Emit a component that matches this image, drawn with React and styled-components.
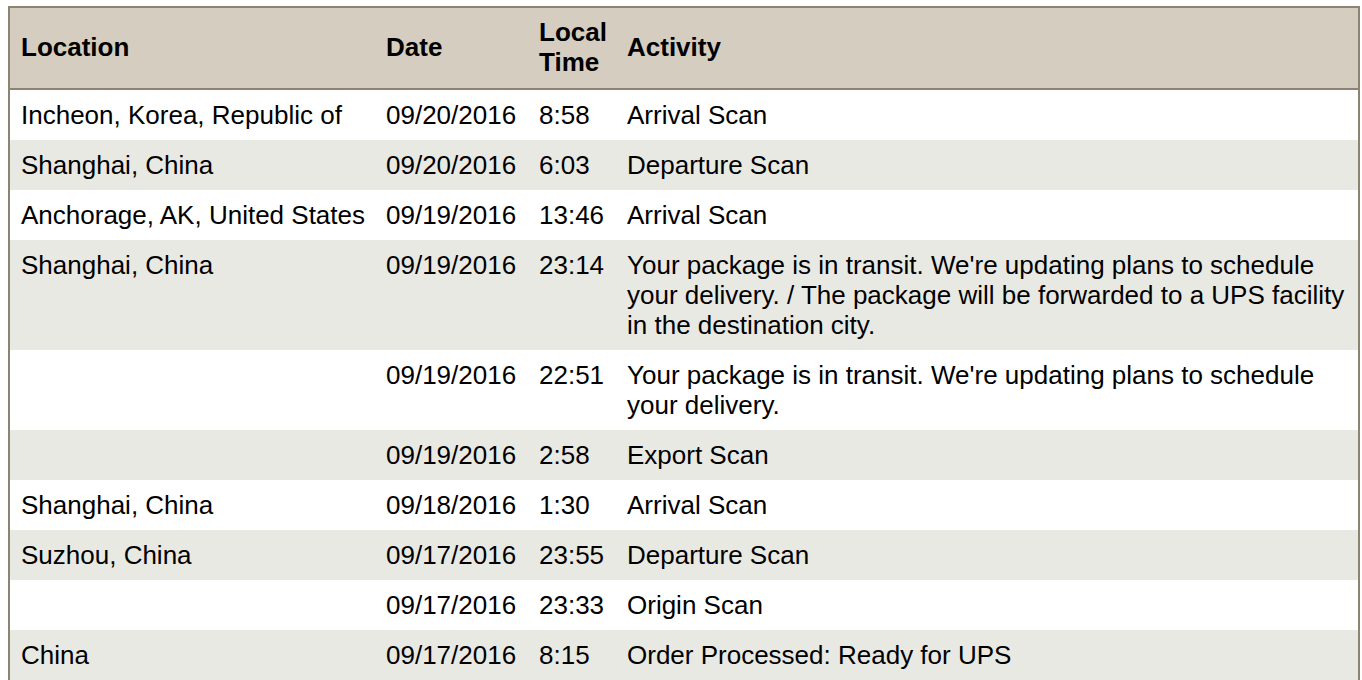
import React from "react";
import styled, { createGlobalStyle } from "styled-components";

const Global = createGlobalStyle`
  html, body { margin: 0; padding: 0; background: #ffffff; }
  body { font-family: "Liberation Sans", Arial, Helvetica, sans-serif; color: #000; }
`;

const Page = styled.div`
  padding: 6px 0 0 8px;
`;

const Table = styled.table`
  width: 1352px;
  table-layout: fixed;
  border-collapse: separate;
  border-spacing: 0;
  border: 2px solid #8c8373;
  border-bottom: none;
  font-size: 26px;
  line-height: 30px;
`;

const HeadCell = styled.th`
  background: #d5cdc0;
  border-bottom: 2px solid #8c8373;
  text-align: left;
  vertical-align: middle;
  font-weight: bold;
  padding: 9px 11px 11px;
  height: 60px;
  box-sizing: content-box;
`;

const Row = styled.tr`
  background: ${(p) => (p.$shaded ? "#e9e9e4" : "#ffffff")};
`;

const Cell = styled.td`
  vertical-align: top;
  padding: 10px 11px;
  white-space: ${(p) => (p.$wrap ? "normal" : "nowrap")};
`;

const rows = [
  ["Incheon, Korea, Republic of", "09/20/2016", "8:58", "Arrival Scan"],
  ["Shanghai, China", "09/20/2016", "6:03", "Departure Scan"],
  ["Anchorage, AK, United States", "09/19/2016", "13:46", "Arrival Scan"],
  [
    "Shanghai, China",
    "09/19/2016",
    "23:14",
    "Your package is in transit. We're updating plans to schedule your delivery. / The package will be forwarded to a UPS facility in the destination city.",
  ],
  [
    "",
    "09/19/2016",
    "22:51",
    "Your package is in transit. We're updating plans to schedule your delivery.",
  ],
  ["", "09/19/2016", "2:58", "Export Scan"],
  ["Shanghai, China", "09/18/2016", "1:30", "Arrival Scan"],
  ["Suzhou, China", "09/17/2016", "23:55", "Departure Scan"],
  ["", "09/17/2016", "23:33", "Origin Scan"],
  ["China", "09/17/2016", "8:15", "Order Processed: Ready for UPS"],
];

export default function App() {
  return (
    <Page>
      <Global />
      <Table>
        <colgroup>
          <col style={{ width: "365px" }} />
          <col style={{ width: "153px" }} />
          <col style={{ width: "88px" }} />
          <col />
        </colgroup>
        <thead>
          <tr>
            <HeadCell>Location</HeadCell>
            <HeadCell>Date</HeadCell>
            <HeadCell>
              Local
              <br />
              Time
            </HeadCell>
            <HeadCell>Activity</HeadCell>
          </tr>
        </thead>
        <tbody>
          {rows.map((r, i) => (
            <Row key={i} $shaded={i % 2 === 1}>
              <Cell>{r[0]}</Cell>
              <Cell>{r[1]}</Cell>
              <Cell>{r[2]}</Cell>
              <Cell $wrap>{r[3]}</Cell>
            </Row>
          ))}
        </tbody>
      </Table>
    </Page>
  );
}
